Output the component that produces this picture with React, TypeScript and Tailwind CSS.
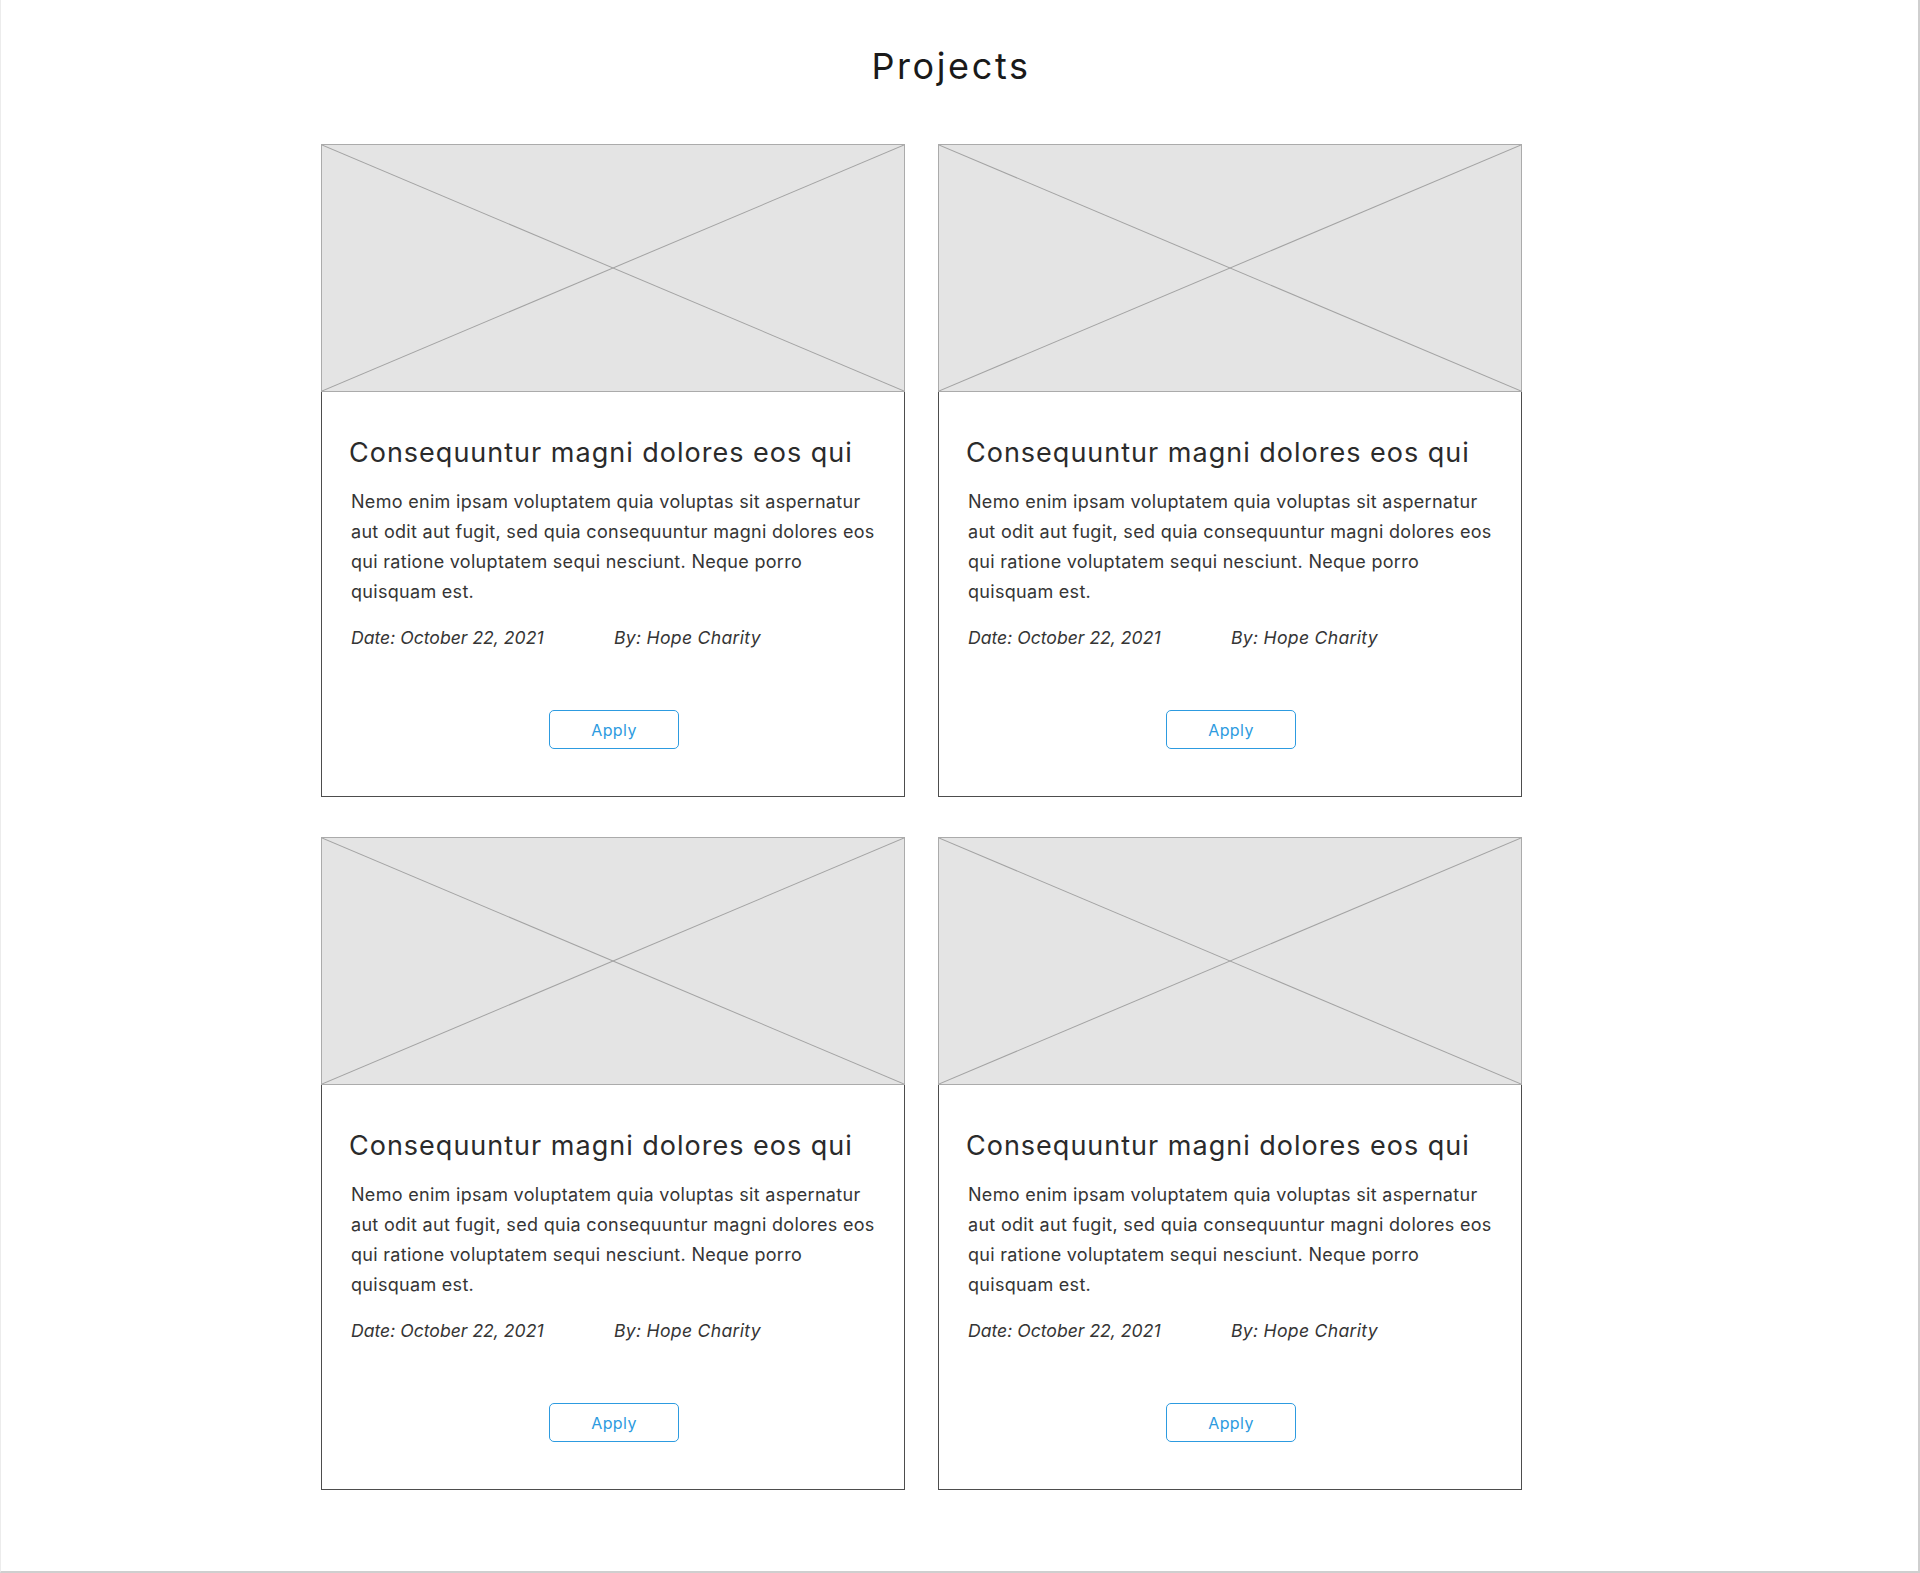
import React from "react";

const body = [
  "Nemo enim ipsam voluptatem quia voluptas sit aspernatur",
  "aut odit aut fugit, sed quia consequuntur magni dolores eos",
  "qui ratione voluptatem sequi nesciunt. Neque porro",
  "quisquam est.",
];

function Placeholder() {
  return (
    <div className="relative h-[248px] w-full border border-[#ababab] bg-[#e4e4e4]">
      <svg className="absolute inset-0 h-full w-full" viewBox="0 0 100 100" preserveAspectRatio="none">
        <line x1="0" y1="0" x2="100" y2="100" stroke="#a3a3a3" strokeWidth="1" vectorEffect="non-scaling-stroke" />
        <line x1="100" y1="0" x2="0" y2="100" stroke="#a3a3a3" strokeWidth="1" vectorEffect="non-scaling-stroke" />
      </svg>
    </div>
  );
}

function Card() {
  return (
    <div className="flex h-[653px] w-[584px] flex-col">
      <Placeholder />
      <div className="flex flex-1 flex-col border-x border-b border-[#4d4d4d] pl-[27px] pt-[43px]">
        <h2 className="whitespace-nowrap text-[27px] leading-[36px] tracking-[1px] font-normal text-[#2b2b2b]">
          Consequuntur magni dolores eos qui
        </h2>
        <div className="mt-[16px] pl-[2px] text-[18px] leading-[30px] tracking-[0.3px] text-[#353535]">
          {body.map((l) => (
            <div key={l} className="whitespace-nowrap">{l}</div>
          ))}
        </div>
        <div className="mt-[16px] flex pl-[2px] text-[17.6px] leading-[30px] italic text-[#353535]">
          <span className="w-[263px] whitespace-nowrap">Date: October 22, 2021</span>
          <span className="whitespace-nowrap tracking-[0.3px]">By: Hope Charity</span>
        </div>
        <div className="mt-[57px] flex justify-center pr-[25px]">
          <button className="flex h-[39px] w-[130px] items-center justify-center rounded-[5px] border border-[#2d9be0] bg-white text-[16px] tracking-[0.4px] text-[#2d9be0]">
            Apply
          </button>
        </div>
      </div>
    </div>
  );
}

export default function App() {
  return (
    <div
      className="h-[1573px] w-full border-l border-r-2 border-b-2 border-l-[#ececec] border-r-[#cfcfcf] border-b-[#cfcfcf] bg-white"
      style={{ fontFamily: "Inter, 'Noto Sans', sans-serif" }}
    >
      <h1 className="w-[1900px] pt-[46px] text-center text-[36px] leading-[40px] tracking-[2.6px] font-normal text-[#1a1a1a]">
        Projects
      </h1>
      <div className="ml-[320px] mt-[58px] grid grid-cols-[584px_584px] gap-x-[33px] gap-y-[40px]">
        <Card />
        <Card />
        <Card />
        <Card />
      </div>
    </div>
  );
}
